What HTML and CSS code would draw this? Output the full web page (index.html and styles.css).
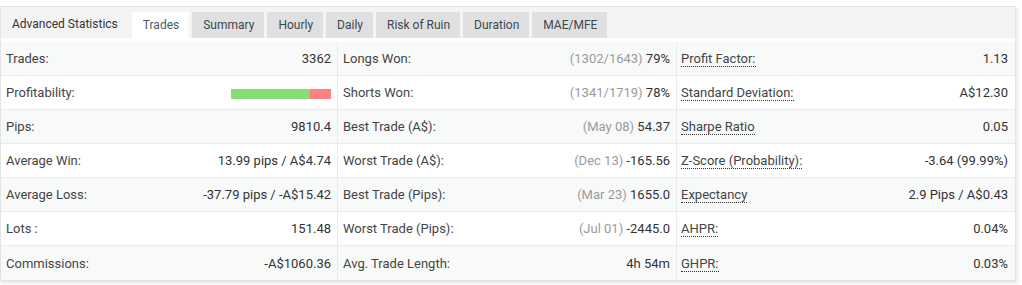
FILE: index.html
```html
<html>

<head>
  <meta charset="UTF-8">
  <title>Advanced Statistics</title>
  <link rel="stylesheet" href="styles.css">
</head>

<body>

  <div id="stats">

    <div class="header">
      <span class="title">Advanced Statistics</span>
      <ul class="tabs">
        <li class="active">Trades</li>
        <li>Summary</li>
        <li>Hourly</li>
        <li>Daily</li>
        <li>Risk of Ruin</li>
        <li>Duration</li>
        <li>MAE/MFE</li>
      </ul>
    </div>

    <div class="table">
      <div class="row">
        <div class="cell"><span>Trades:</span><span>3362</span></div>
        <div class="cell"><span>Longs Won:</span><span><em>(1302/1643)</em> 79%</span></div>
        <div class="cell"><span class="tip">Profit Factor:</span><span>1.13</span></div>
      </div>
      <div class="row">
        <div class="cell"><span>Profitability:</span><span class="bar"><i class="win" style="width: 79%"></i><i class="loss"></i></span></div>
        <div class="cell"><span>Shorts Won:</span><span><em>(1341/1719)</em> 78%</span></div>
        <div class="cell"><span class="tip">Standard Deviation:</span><span>A$12.30</span></div>
      </div>
      <div class="row">
        <div class="cell"><span>Pips:</span><span>9810.4</span></div>
        <div class="cell"><span>Best Trade (A$):</span><span><em>(May 08)</em> 54.37</span></div>
        <div class="cell"><span class="tip">Sharpe Ratio</span><span>0.05</span></div>
      </div>
      <div class="row">
        <div class="cell"><span>Average Win:</span><span>13.99 pips / A$4.74</span></div>
        <div class="cell"><span>Worst Trade (A$):</span><span><em>(Dec 13)</em> -165.56</span></div>
        <div class="cell"><span class="tip">Z-Score (Probability):</span><span>-3.64 (99.99%)</span></div>
      </div>
      <div class="row">
        <div class="cell"><span>Average Loss:</span><span>-37.79 pips / -A$15.42</span></div>
        <div class="cell"><span>Best Trade (Pips):</span><span><em>(Mar 23)</em> 1655.0</span></div>
        <div class="cell"><span class="tip">Expectancy</span><span>2.9 Pips / A$0.43</span></div>
      </div>
      <div class="row">
        <div class="cell"><span>Lots :</span><span>151.48</span></div>
        <div class="cell"><span>Worst Trade (Pips):</span><span><em>(Jul 01)</em> -2445.0</span></div>
        <div class="cell"><span class="tip">AHPR:</span><span>0.04%</span></div>
      </div>
      <div class="row">
        <div class="cell"><span>Commissions:</span><span>-A$1060.36</span></div>
        <div class="cell"><span>Avg. Trade Length:</span><span>4h 54m</span></div>
        <div class="cell"><span class="tip">GHPR:</span><span>0.03%</span></div>
      </div>
    </div>

  </div>

</body>

</html>
```

FILE: styles.css
```css
/* reset */
* {
  margin: 0;
  padding: 0;
  list-style: none;
  box-sizing: border-box;
}
body {
  background: #fff;
  font-family: Roboto, "Liberation Sans", sans-serif;
  font-size: 13px;
  color: #444;
}
#stats {
  width: 1016px;
  margin-top: 6px;
  border: 1px solid #e4e4e4;
  box-shadow: 1px 2px 4px rgba(0, 0, 0, 0.12);
  background: #fff;
}
.header {
  display: flex;
  align-items: flex-end;
  height: 31px;
  background: #f4f4f4;
  font-size: 12px;
}
.header .title {
  padding: 0 14px 0 11px;
  color: #333;
  line-height: 27px;
}
.tabs {
  display: flex;
  gap: 3px;
}
.tabs li {
  height: 26px;
  line-height: 27px;
  padding: 0 10px 0 11px;
  background: #e0e0e0;
  color: #3e4750;
}
.tabs li.active {
  background: #fff;
  color: #4a5b6c;
}
.table {
  padding-top: 4px;
}
.row {
  display: grid;
  grid-template-columns: 337px 339px 1fr;
  height: 34px;
  border-bottom: 1px solid #e6ecee;
}
.row:nth-child(odd) {
  background: #f8fafa;
}
.row:last-child {
  border-bottom: none;
}
.cell {
  display: flex;
  justify-content: space-between;
  align-items: center;
  padding: 0 6px 0 5px;
  border-right: 1px solid #e6ecee;
}
.cell:last-child {
  border-right: none;
  padding: 0 7px 0 4px;
}
.cell span:last-child {
  color: #333;
}
.cell em {
  font-style: normal;
  color: #9a9a9a;
}
.tip {
  border-bottom: 1px dotted #333;
  line-height: 15px;
  margin-top: 1px;
}
.bar {
  display: flex;
  width: 100px;
  height: 10px;
  margin-top: 2px;
}
.bar i {
  display: block;
  height: 10px;
}
.bar .win {
  background: #86df75;
}
.bar .loss {
  flex: 1;
  background: #ff8080;
}
```
